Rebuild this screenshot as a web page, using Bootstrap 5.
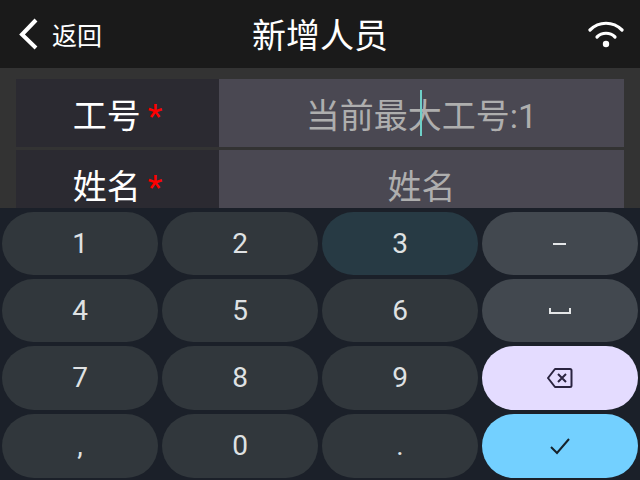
<!DOCTYPE html>
<html lang="zh-CN">
<head>
    <meta charset="UTF-8">
    <meta name="viewport" content="width=device-width, initial-scale=1.0">
    <title>新增人员</title>
    <link href="https://cdn.jsdelivr.net/npm/bootstrap@5.3.0/dist/css/bootstrap.min.css" rel="stylesheet">
    <style>
        html, body { height: 100%; }
        body {
            width: 640px;
            height: 480px;
            overflow: hidden;
            background-color: #333333;
            font-family: "Roboto", "Noto Sans CJK SC", sans-serif;
        }
        .top-bar { height: 68px; background-color: #1a1a1a; color: #fff; }
        .top-side { width: 130px; }
        .back-text { font-size: 25px; line-height: 1; padding-top: 4px; margin-left: 14px; }
        .page-title { font-size: 34px; line-height: 1; padding-top: 4px; }
        .form-area { height: 140px; padding: 11px 16px 0; overflow: hidden; }
        .form-line { height: 68px; margin-bottom: 3px; }
        .field-label {
            width: 203px;
            background-color: #2b2a31;
            color: #fff;
            font-size: 34px;
            padding-top: 7px;
        }
        .field-req { color: #ff0000; margin-left: 7px; }
        .field-value {
            background-color: #4a4852;
            color: #aeaeae;
            font-size: 34px;
            padding-top: 6px;
        }
        .caret-bar {
            position: absolute;
            left: 201px;
            top: 11px;
            width: 2px;
            height: 46px;
            background-color: #6fd0c8;
        }
        .key-pad {
            height: 272px;
            background-color: #1b2029;
            padding: 4px 2px 2px;
            display: grid;
            grid-template-columns: repeat(4, 156px);
            grid-template-rows: 63px 63px 64px 64px;
            gap: 4px;
        }
        .key-btn {
            background-color: #31373c;
            color: #dfe1e3;
            font-size: 28px;
            line-height: 1;
            border-radius: 32px;
        }
        .key-alt { background-color: #42484f; }
        .key-on { background-color: #273a44; }
        .key-del { background-color: #e4dcff; }
        .key-ok { background-color: #73d0ff; }
    </style>
</head>
<body>
    <div class="top-bar d-flex align-items-center justify-content-between">
        <div class="top-side d-flex align-items-center">
            <svg class="ms-3" width="22" height="32" viewBox="0 0 22 32" fill="none" stroke="#fff" stroke-width="4">
                <path d="M20 2 6 16.500l14 13.500"/>
            </svg>
            <span class="back-text">返回</span>
        </div>
        <div class="page-title">新增人员</div>
        <div class="top-side d-flex justify-content-end">
            <svg class="me-3" width="36" height="28" viewBox="0 0 36 28" fill="none" stroke="#fff" stroke-width="3.2" stroke-linecap="round">
                <path d="M2 10C11 1 25 1 34 10"/>
                <path d="M9 17c5-5 13-5 18 0"/>
                <circle cx="18" cy="24" r="3.2" fill="#fff" stroke="none"/>
            </svg>
        </div>
    </div>

    <div class="form-area">
        <div class="form-line d-flex">
            <div class="field-label d-flex align-items-center justify-content-center">工号<span class="field-req">*</span></div>
            <div class="field-value flex-grow-1 d-flex align-items-center justify-content-center position-relative">
                <span>当前最大工号:1</span>
                <span class="caret-bar"></span>
            </div>
        </div>
        <div class="form-line d-flex">
            <div class="field-label d-flex align-items-center justify-content-center">姓名<span class="field-req">*</span></div>
            <div class="field-value flex-grow-1 d-flex align-items-center justify-content-center">姓名</div>
        </div>
    </div>

    <div class="key-pad">
        <div class="key-btn d-flex align-items-center justify-content-center">1</div>
        <div class="key-btn d-flex align-items-center justify-content-center">2</div>
        <div class="key-btn key-on d-flex align-items-center justify-content-center">3</div>
        <div class="key-btn key-alt d-flex align-items-center justify-content-center">
            <svg width="14" height="4" viewBox="0 0 14 4"><rect y="1" width="13" height="2" fill="#e4e6e8"/></svg>
        </div>
        <div class="key-btn d-flex align-items-center justify-content-center">4</div>
        <div class="key-btn d-flex align-items-center justify-content-center">5</div>
        <div class="key-btn d-flex align-items-center justify-content-center">6</div>
        <div class="key-btn key-alt d-flex align-items-center justify-content-center">
            <svg width="22" height="8" viewBox="0 0 22 8" fill="none" stroke="#e4e6e8" stroke-width="2"><path d="M1 1v5h20V1"/></svg>
        </div>
        <div class="key-btn d-flex align-items-center justify-content-center">7</div>
        <div class="key-btn d-flex align-items-center justify-content-center">8</div>
        <div class="key-btn d-flex align-items-center justify-content-center">9</div>
        <div class="key-btn key-del d-flex align-items-center justify-content-center">
            <svg width="26" height="22" viewBox="0 0 26 22" fill="none" stroke="#2a2440" stroke-width="2" stroke-linejoin="round">
                <path d="M8 2h15a1.500 1.500 0 0 1 1.500 1.500v15a1.500 1.500 0 0 1-1.500 1.500H8l-7-9z"/>
                <path d="m11 7 8 8m0-8-8 8"/>
            </svg>
        </div>
        <div class="key-btn d-flex align-items-center justify-content-center">,</div>
        <div class="key-btn d-flex align-items-center justify-content-center">0</div>
        <div class="key-btn d-flex align-items-center justify-content-center">.</div>
        <div class="key-btn key-ok d-flex align-items-center justify-content-center">
            <svg width="22" height="18" viewBox="0 0 22 18" fill="none" stroke="#16212a" stroke-width="2"><path d="m2 10 6 6L20 2"/></svg>
        </div>
    </div>

    <script src="https://cdn.jsdelivr.net/npm/bootstrap@5.3.0/dist/js/bootstrap.bundle.min.js"></script>
</body>
</html>
